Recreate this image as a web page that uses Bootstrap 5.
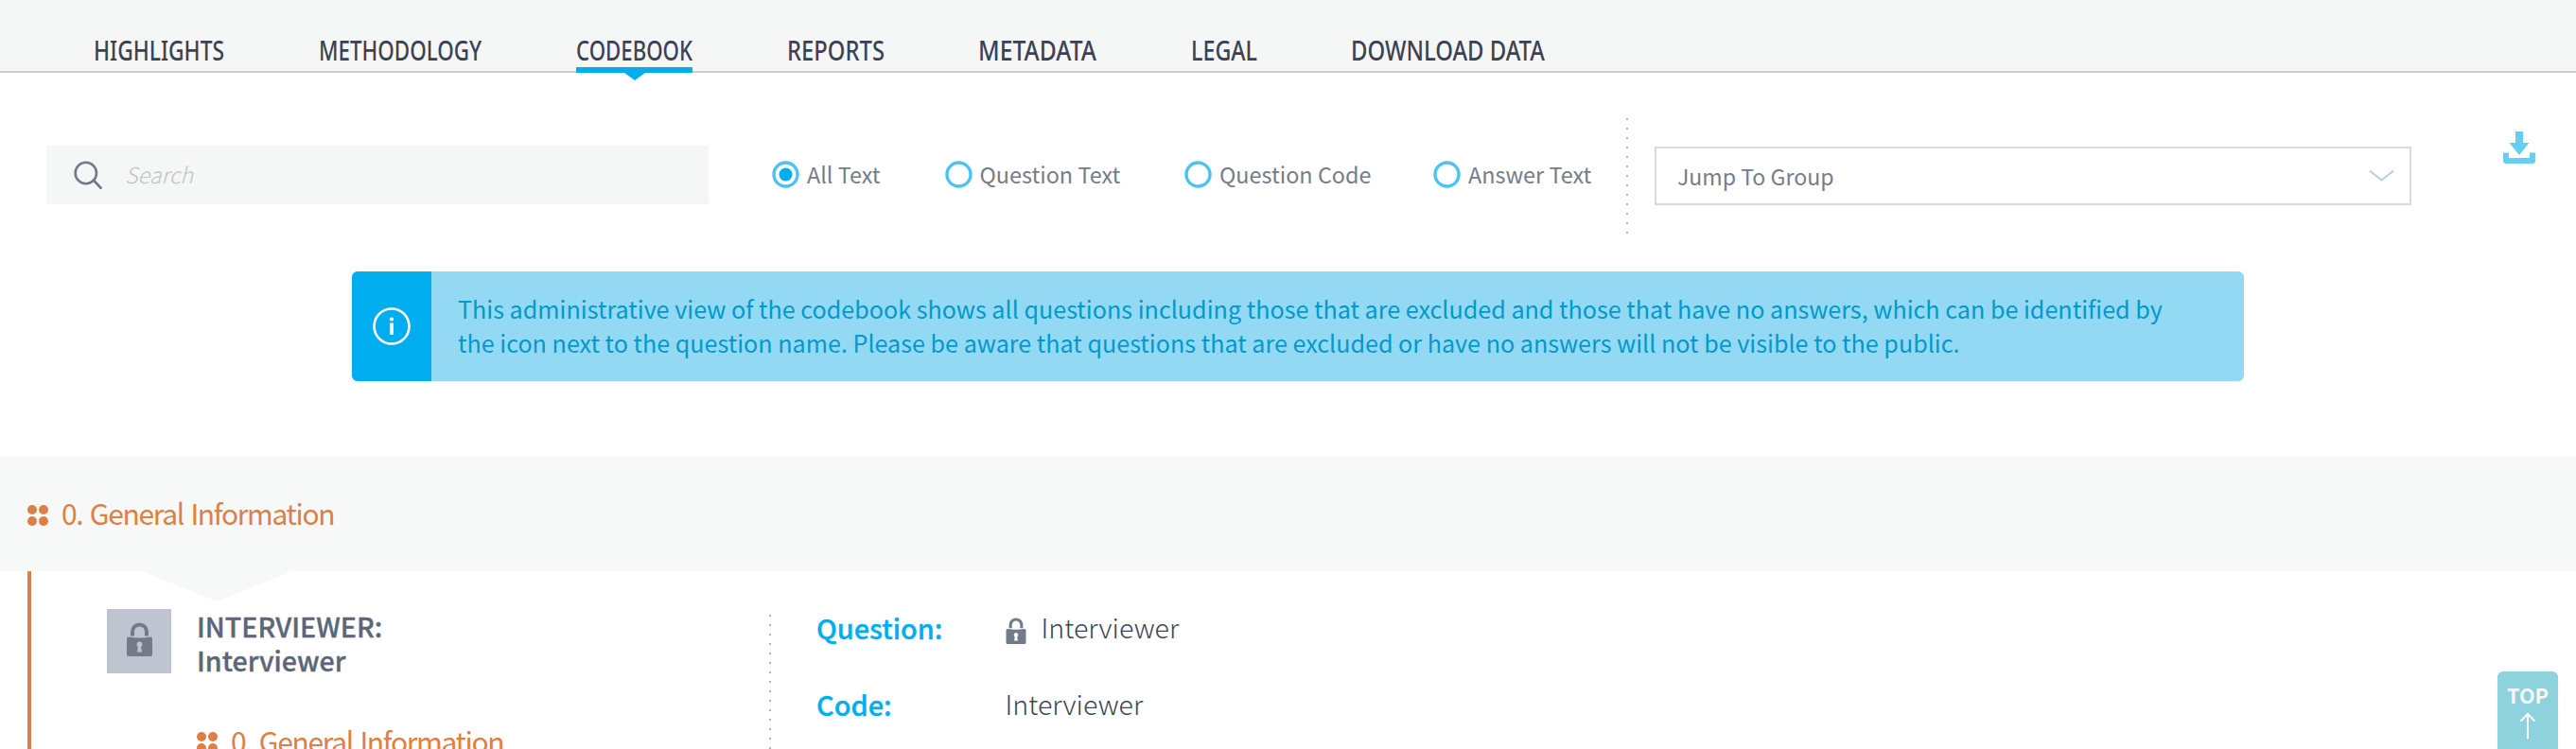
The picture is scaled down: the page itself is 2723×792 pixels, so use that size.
<!DOCTYPE html>
<html lang="en">
<head>
<meta charset="utf-8">
<title>Codebook</title>
<link href="https://cdn.jsdelivr.net/npm/bootstrap@5.3.0/dist/css/bootstrap.min.css" rel="stylesheet">
<style>
body{font-family:"Noto Sans CJK SC",sans-serif;color:#3b4557;background:#fff;height:792px;overflow:hidden}
.topnav{height:77px;background:#f5f7f6;border-bottom:2px solid #cbcbcb;padding-left:99px}
.topnav .nav{gap:100px;height:77px}
.topnav .nav-link{padding:37px 0 0;height:77px;line-height:0;position:relative}
.topnav svg{font:500 28px "Noto Sans",sans-serif;fill:#3b4254;display:block;overflow:visible}
.topnav .active{border-bottom:6px solid #00aeef}
.topnav .active::after{content:"";position:absolute;left:50%;top:77px;margin-left:-11px;border:11px solid transparent;border-top:8px solid #00aeef;border-bottom:0}
.filters{height:210px;padding-left:49px;font-size:23.4px;color:#767c89}
.searchbox{width:700px;height:62px;margin-top:77px;background:#f5f7f6;padding-left:29px}
.searchbox input{border:0;background:none;outline:0;margin-left:24px;padding:0;font-size:23.4px;font-weight:300;font-style:italic}
.searchbox input::placeholder{color:#bfc3c8;opacity:1}
.scopes{margin:78px 0 0 67px;height:60px;width:903px}
.scopes label{gap:8px;width:0;white-space:nowrap}
.scopes label:nth-child(1){flex:0 0 182.5px}
.scopes label:nth-child(2){flex:0 0 253.5px}
.scopes label:nth-child(3){flex:0 0 263px}
.ring{width:29px;height:29px;flex:none}
.dots-v{width:2px;background:repeating-linear-gradient(#b3b3b3 0 2px,transparent 2px 10px)}
.jump{width:800px;height:62px;margin:78px 0 0 28px;border:2px solid #d9dadb;padding:0 16px 0 22px;font-size:23.1px}
.notice{width:2000px;height:116px;margin-left:372px;border-radius:6px;background:#94d9f4;color:#0099cc;font-size:25.14px;line-height:36px}
.notice-icon{width:84px;background:#00aeef}
.notice-text{padding:21px 0 0 28px}
.band{height:121px;margin-top:80px;padding:0 0 3px 29px;background:#f7f9f8}
.grp{color:#dc8045;font-size:30px;letter-spacing:-1.35px;word-spacing:2.2px;line-height:36px;white-space:nowrap}
.grp svg{margin:5px 14px 0 0;flex:none}
.entry{height:188px;margin-left:29px;border-left:4px solid #dc8045;position:relative}
.entry::before{content:"";position:absolute;left:116px;top:0;border:80px solid transparent;border-top:32px solid #f7f9f8;border-bottom:0}
.lockbox{width:68px;height:68px;margin:40px 27px 0 80px;background:#bfc5d0;flex:none}
.summary{width:605px;padding-top:39.5px;font-size:28.6px;font-weight:500;line-height:36px;color:#5d6676}
.summary>div:not(.grp),.details dt{-webkit-text-stroke:.35px currentColor}
.summary .grp{margin-top:49px;font-weight:400}
.details{margin-left:48px;padding-top:41px;font-size:28.6px;line-height:36px;font-weight:300}
.details dl{display:grid;grid-template-columns:199.5px auto;row-gap:45px}
.details dt{color:#00aeef;font-weight:500;font-size:28.9px}
.details dd{margin:0}
.totop{position:fixed;right:19px;top:710px;width:64px;height:92px;border-radius:6px;background:#8dd2dc;color:#f5f8f8;font:700 21.6px/30px "Noto Sans CJK SC",sans-serif;padding-top:10px}
</style>
</head>
<body>
<svg width="0" height="0" class="position-absolute"><defs>
<symbol id="lock" viewBox="0 0 27 36"><path d="M6 14.5V10a7.5 7.5 0 0 1 15 0v4.500" fill="none" stroke="#737a8a" stroke-width="4"/><path fill="#737a8a" fill-rule="evenodd" d="M2 15.500q11.500 2 23 0a2 2 0 0 1 2 2V34a2 2 0 0 1-2 2H2a2 2 0 0 1-2-2V17.500a2 2 0 0 1 2-2ZM13.500 20.500a3 3 0 0 0-1.600 5.500L11 31.500h5L15.100 26a3 3 0 0 0-1.600-5.500Z"/></symbol>
<symbol id="four" viewBox="0 0 22 22"><g fill="#dc8045"><circle cx="5" cy="5" r="5"/><circle cx="17" cy="5" r="5"/><circle cx="5" cy="17" r="5"/><circle cx="17" cy="17" r="5"/></g></symbol>
<symbol id="ring" viewBox="0 0 29 29"><circle cx="14.500" cy="14.500" r="12.500" fill="none" stroke="#4bc3f2" stroke-width="3.400"/></symbol>
</defs></svg>

<header class="topnav">
<nav class="nav flex-nowrap">
<a class="nav-link"><svg width="139" height="34"><text y="27" textLength="138" lengthAdjust="spacingAndGlyphs">HIGHLIGHTS</text></svg></a>
<a class="nav-link"><svg width="171" height="34"><text x="-1" y="27" textLength="172" lengthAdjust="spacingAndGlyphs">METHODOLOGY</text></svg></a>
<a class="nav-link active"><svg width="123" height="34"><text y="27" textLength="123" lengthAdjust="spacingAndGlyphs">CODEBOOK</text></svg></a>
<a class="nav-link"><svg width="103" height="34"><text y="27" textLength="103" lengthAdjust="spacingAndGlyphs">REPORTS</text></svg></a>
<a class="nav-link"><svg width="124" height="34"><text x="-1" y="27" textLength="125" lengthAdjust="spacingAndGlyphs">METADATA</text></svg></a>
<a class="nav-link"><svg width="69" height="34"><text y="27" textLength="70" lengthAdjust="spacingAndGlyphs">LEGAL</text></svg></a>
<a class="nav-link"><svg width="205" height="34"><text y="27" textLength="205" lengthAdjust="spacingAndGlyphs">DOWNLOAD DATA</text></svg></a>
</nav>
</header>

<section class="filters d-flex align-items-start">
<div class="searchbox d-flex align-items-center">
<svg width="30" height="32" viewBox="0 0 30 32" fill="none" stroke="#737a87"><circle cx="12.800" cy="14" r="11.200" stroke-width="2.600"/><path d="M19 22h2.500l8 8.500M20.500 21.500l8.500 9" stroke-width="2.400"/></svg>
<input type="text" placeholder="Search">
</div>
<div class="scopes d-flex align-items-center">
<label class="d-flex align-items-center"><svg class="ring"><use href="#ring"/><circle cx="14.500" cy="14.500" r="7" fill="#00aeef"/></svg>All Text</label>
<label class="d-flex align-items-center"><svg class="ring"><use href="#ring"/></svg>Question Text</label>
<label class="d-flex align-items-center"><svg class="ring"><use href="#ring"/></svg>Question Code</label>
<label class="d-flex align-items-center"><svg class="ring"><use href="#ring"/></svg>Answer Text</label>
</div>
<div class="dots-v" style="height:122px;margin-top:48px"></div>
<div class="jump d-flex align-items-center justify-content-between"><span>Jump To Group</span>
<svg width="27" height="14" viewBox="0 0 27 14" fill="none" stroke="#b5cfd6" stroke-width="2"><path d="M1 1.500l12.500 10L26 1.500"/></svg></div>
<svg width="34" height="34" viewBox="0 0 34 34" style="margin:62px 0 0 97px" fill="#66cdf4"><path d="M13 0h8v12h6.500L17 25 6.500 12H13ZM0 22.500h6V28h22v-5.500h6V31a3 3 0 0 1-3 3H3a3 3 0 0 1-3-3Z"/></svg>
</section>

<div class="notice d-flex overflow-hidden">
<div class="notice-icon d-flex align-items-center justify-content-center"><svg width="40" height="40" viewBox="0 0 40 40"><circle cx="20" cy="20" r="18.500" fill="none" stroke="#fff" stroke-width="2.600"/><circle cx="20" cy="12.500" r="2.100" fill="#fff"/><path d="M18.200 16.500h3.600v12.500h-3.600Z" fill="#fff"/></svg></div>
<div class="notice-text text-nowrap">This administrative view of the codebook shows all questions including those that are excluded and those that have no answers, which can be identified by<br>the icon next to the question name. Please be aware that questions that are excluded or have no answers will not be visible to the public.</div>
</div>

<div class="band d-flex align-items-center"><div class="grp d-flex align-items-center"><svg width="22" height="22"><use href="#four"/></svg><span>0. General Information</span></div></div>

<main class="entry d-flex align-items-start">
<div class="lockbox d-flex align-items-center justify-content-center"><svg width="27" height="36" style="margin-top:-5px"><use href="#lock"/></svg></div>
<div class="summary"><div>INTERVIEWER:</div><div>Interviewer</div>
<div class="grp d-flex align-items-center"><svg width="22" height="22"><use href="#four"/></svg><span>0. General Information</span></div></div>
<div class="dots-v" style="height:142px;margin-top:46px"></div>
<div class="details"><dl>
<dt>Question:</dt><dd class="d-flex"><svg width="22" height="28" style="margin:8px 16px 0 0"><use href="#lock"/></svg>Interviewer</dd>
<dt>Code:</dt><dd>Interviewer</dd>
</dl></div>
</main>
<a class="totop d-flex flex-column align-items-center text-decoration-none">TOP
<svg width="18" height="28" viewBox="0 0 18 28" fill="none" stroke="#fff" stroke-width="2" style="margin-top:3px"><path d="M9 28V2M1.500 9.500L9 2l7.500 7.500"/></svg></a>
<script src="https://cdn.jsdelivr.net/npm/bootstrap@5.3.0/dist/js/bootstrap.bundle.min.js"></script>
</body>
</html>
